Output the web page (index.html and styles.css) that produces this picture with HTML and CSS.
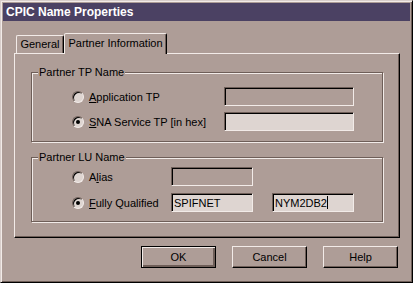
FILE: index.html
```html
<!DOCTYPE html>
<html lang="en">
<head>
  <meta charset="UTF-8" />
  <title>CPIC Name Properties</title>
  <link rel="stylesheet" href="styles.css">
</head>
<body>
  <div class="window">
    <div class="titlebar">CPIC Name Properties</div>

    <div class="tabs">
      <div class="tab">General</div>
      <div class="tab active">Partner Information</div>
    </div>

    <div class="panel">
      <div class="group group-tp">
        <div class="legend">Partner TP Name</div>
        <div class="rows">
          <div class="row">
            <label class="option"><span class="radio"></span><span><u>A</u>pplication TP</span></label>
            <div class="field disabled"></div>
          </div>
          <div class="row">
            <label class="option"><span class="radio checked"></span><span><u>S</u>NA Service TP [in hex]</span></label>
            <div class="field"></div>
          </div>
        </div>
      </div>

      <div class="group group-lu">
        <div class="legend">Partner LU Name</div>
        <div class="rows">
          <div class="row">
            <label class="option"><span class="radio"></span><span>A<u>l</u>ias</span></label>
            <div class="field small disabled"></div>
          </div>
          <div class="row">
            <label class="option"><span class="radio checked"></span><span><u>F</u>ully Qualified</span></label>
            <div class="field small">SPIFNET</div>
            <div class="field small second">NYM2DB2<span class="caret"></span></div>
          </div>
        </div>
      </div>
    </div>

    <div class="buttons">
      <button class="default">OK</button>
      <button>Cancel</button>
      <button>Help</button>
    </div>
  </div>
</body>
</html>
```

FILE: styles.css
```css
:root {
  --face: #ae9d97;
  --light: #f2ebe8;
  --shade: #6e5e58;
  --dark: #000000;
  --field: #ded5d1;
  --title: #4b4163;
}

* {
  box-sizing: border-box;
  margin: 0;
  padding: 0;
}

body {
  background: var(--face);
  font-family: "Liberation Sans", Arial, sans-serif;
  font-size: 11px;
  color: #000;
}

.window {
  width: 413px;
  height: 283px;
  padding: 2px;
  background: var(--face);
  border: 1px solid;
  border-color: #d8cecb var(--dark) var(--dark) #d8cecb;
  box-shadow: inset 1px 1px 0 var(--light), inset -1px -1px 0 var(--shade);
  display: flex;
  flex-direction: column;
}

.titlebar {
  height: 18px;
  line-height: 18px;
  padding-left: 3px;
  background: var(--title);
  color: #fff;
  font-weight: bold;
  font-size: 12px;
}

/* Tabs */
.tabs {
  display: flex;
  align-items: flex-end;
  margin: 12px 0 0 13px;
  height: 20px;
}

.tab {
  width: 48px;
  height: 18px;
  line-height: 17px;
  text-align: center;
  border: 1px solid;
  border-bottom: none;
  border-color: var(--light) var(--dark) transparent var(--light);
  box-shadow: inset -1px 0 0 var(--shade);
  border-radius: 2px 2px 0 0;
}

.tab.active {
  width: 103px;
  height: 21px;
  line-height: 18px;
  margin-bottom: -1px;
  position: relative;
  z-index: 1;
  background: var(--face);
}

/* Panel */
.panel {
  width: 386px;
  height: 185px;
  margin-left: 11px;
  border: 1px solid;
  border-color: var(--light) var(--dark) var(--dark) var(--light);
  box-shadow: inset -1px -1px 0 var(--shade);
  padding: 18px 16px 0 16px;
}

.group {
  border: 1px solid var(--shade);
  box-shadow: 1px 1px 0 var(--light), inset 1px 1px 0 var(--light);
  padding-left: 40px;
}

.group-tp {
  height: 70px;
}

.group-lu {
  height: 65px;
  margin-top: 15px;
}

.legend {
  width: fit-content;
  height: 13px;
  line-height: 13px;
  margin: -7px 0 0 -34px;
  padding: 0 1px;
  background: var(--face);
}

.rows {
  display: flex;
  flex-direction: column;
}

.group-tp .rows {
  margin-top: 8px;
  gap: 6px;
}

.group-lu .rows {
  margin-top: 3px;
  gap: 7px;
}

.row {
  display: flex;
  align-items: center;
  height: 19px;
}

.option {
  display: flex;
  align-items: center;
  gap: 5px;
}

.group-tp .option {
  width: 152px;
}

.group-lu .option {
  width: 99px;
}

.radio {
  width: 12px;
  height: 12px;
  border-radius: 50%;
  border: 1px solid;
  border-color: var(--shade) var(--light) var(--light) var(--shade);
  box-shadow: inset 1px 1px 0 var(--dark);
  background: var(--field);
  display: flex;
  align-items: center;
  justify-content: center;
}

.radio.checked::after {
  content: "";
  width: 4px;
  height: 4px;
  border-radius: 50%;
  background: var(--dark);
}

.field {
  width: 130px;
  height: 19px;
  line-height: 16px;
  padding-left: 2px;
  background: var(--field);
  border: 1px solid;
  border-color: var(--shade) var(--light) var(--light) var(--shade);
  box-shadow: inset 1px 1px 0 var(--dark);
  display: flex;
  align-items: center;
}

.field.disabled {
  background: var(--face);
}

.field.small {
  width: 82px;
}

.field.second {
  margin-left: 19px;
}

.caret {
  width: 1px;
  height: 13px;
  background: var(--dark);
}

/* Buttons */
.buttons {
  display: flex;
  justify-content: flex-end;
  gap: 16px;
  margin-top: 8px;
  padding-right: 12px;
}

button {
  width: 75px;
  height: 22px;
  font-family: inherit;
  font-size: 11px;
  color: #000;
  background: var(--face);
  border: 1px solid;
  border-color: var(--light) var(--dark) var(--dark) var(--light);
  box-shadow: inset -1px -1px 0 var(--shade);
}

button.default {
  border-color: var(--dark);
  box-shadow: inset 1px 1px 0 var(--light), inset -2px -2px 0 var(--shade);
}
```
